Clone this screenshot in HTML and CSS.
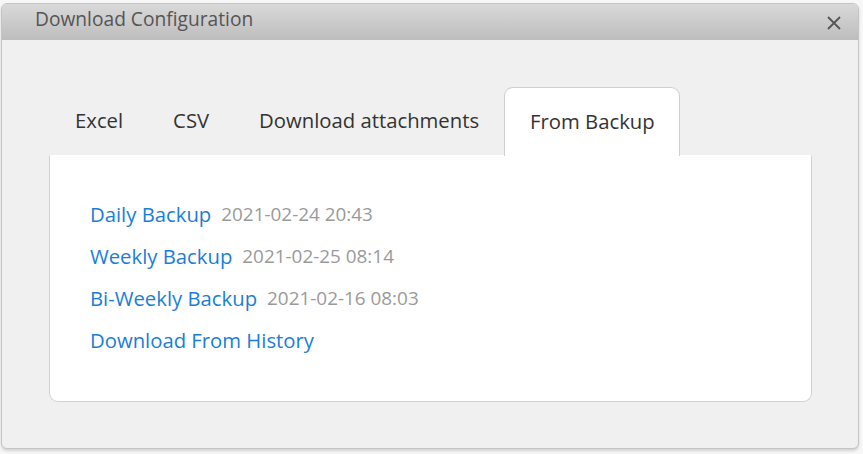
FILE: index.html
```html
<!DOCTYPE html>
<html>
<head>
<meta charset="utf-8">
<link rel="stylesheet" href="styles.css">
</head>
<body>
<div class="dialog">
  <div class="header">
    <span class="title">Download Configuration</span>
    <svg class="close" width="16" height="16" viewBox="0 0 16 16"><path d="M2 2 L14 14 M14 2 L2 14" stroke="#555" stroke-width="1.8" fill="none"/></svg>
  </div>
  <div class="body">
    <div class="tabs">
      <div class="tab">Excel</div>
      <div class="tab">CSV</div>
      <div class="tab">Download attachments</div>
      <div class="tab active">From Backup</div>
    </div>
    <div class="panel">
      <div class="row"><a class="link">Daily Backup</a><span class="date">2021-02-24 20:43</span></div>
      <div class="row"><a class="link">Weekly Backup</a><span class="date">2021-02-25 08:14</span></div>
      <div class="row"><a class="link">Bi-Weekly Backup</a><span class="date">2021-02-16 08:03</span></div>
      <div class="row"><a class="link">Download From History</a></div>
    </div>
  </div>
</div>
</body>
</html>
```
FILE: styles.css
```css
html, body {
  margin: 0;
  padding: 0;
}
body {
  background: #f7f7f7;
  font-family: "Open Sans", "Noto Sans", sans-serif;
  height: 454px;
  overflow: hidden;
}
.dialog {
  margin: 3px 0 0 1px;
  width: 858px;
  height: 446px;
  box-sizing: border-box;
  border: 1px solid #c4c4c4;
  border-radius: 6px;
  background: #f0f0f0;
  overflow: hidden;
  box-shadow: 0 2px 3px rgba(0,0,0,0.15);
  display: flex;
  flex-direction: column;
}
.header {
  height: 36px;
  flex: none;
  background: linear-gradient(#d9d9d9, #bdbdbd);
  display: flex;
  align-items: center;
  justify-content: space-between;
  padding: 0 16px 0 33px;
}
.title {
  font-size: 19.2px;
  color: #555;
  margin-top: -8px;
}
.close {
  margin-top: 1px;
}
.body {
  flex: 1;
  padding: 47px 46px 0 47px;
}
.tabs {
  display: flex;
  height: 68px;
  padding-left: 1px;
}
.tab {
  font-size: 20.3px;
  color: #333;
  padding: 0 24px 3px;
  border: 1px solid transparent;
  border-bottom: none;
  display: flex;
  align-items: center;
}
.tab.active {
  background: #fff;
  border-color: #cfcfcf;
  border-radius: 9px 9px 0 0;
  padding: 0 24px 3px 25px;
  position: relative;
  z-index: 1;
  margin-bottom: -1px;
}
.panel {
  background: #fff;
  border: 1px solid #d2d2d2;
  border-top-color: #fff;
  border-radius: 0 0 9px 9px;
  height: 247px;
  box-sizing: border-box;
  padding: 37px 40px 0 40px;
}
.row {
  height: 42px;
  display: flex;
  align-items: center;
}
.link {
  color: #1b7ed6;
  font-size: 20.3px;
  margin-right: 10px;
}
.date {
  color: #9a9a9a;
  font-size: 18.9px;
}
```
